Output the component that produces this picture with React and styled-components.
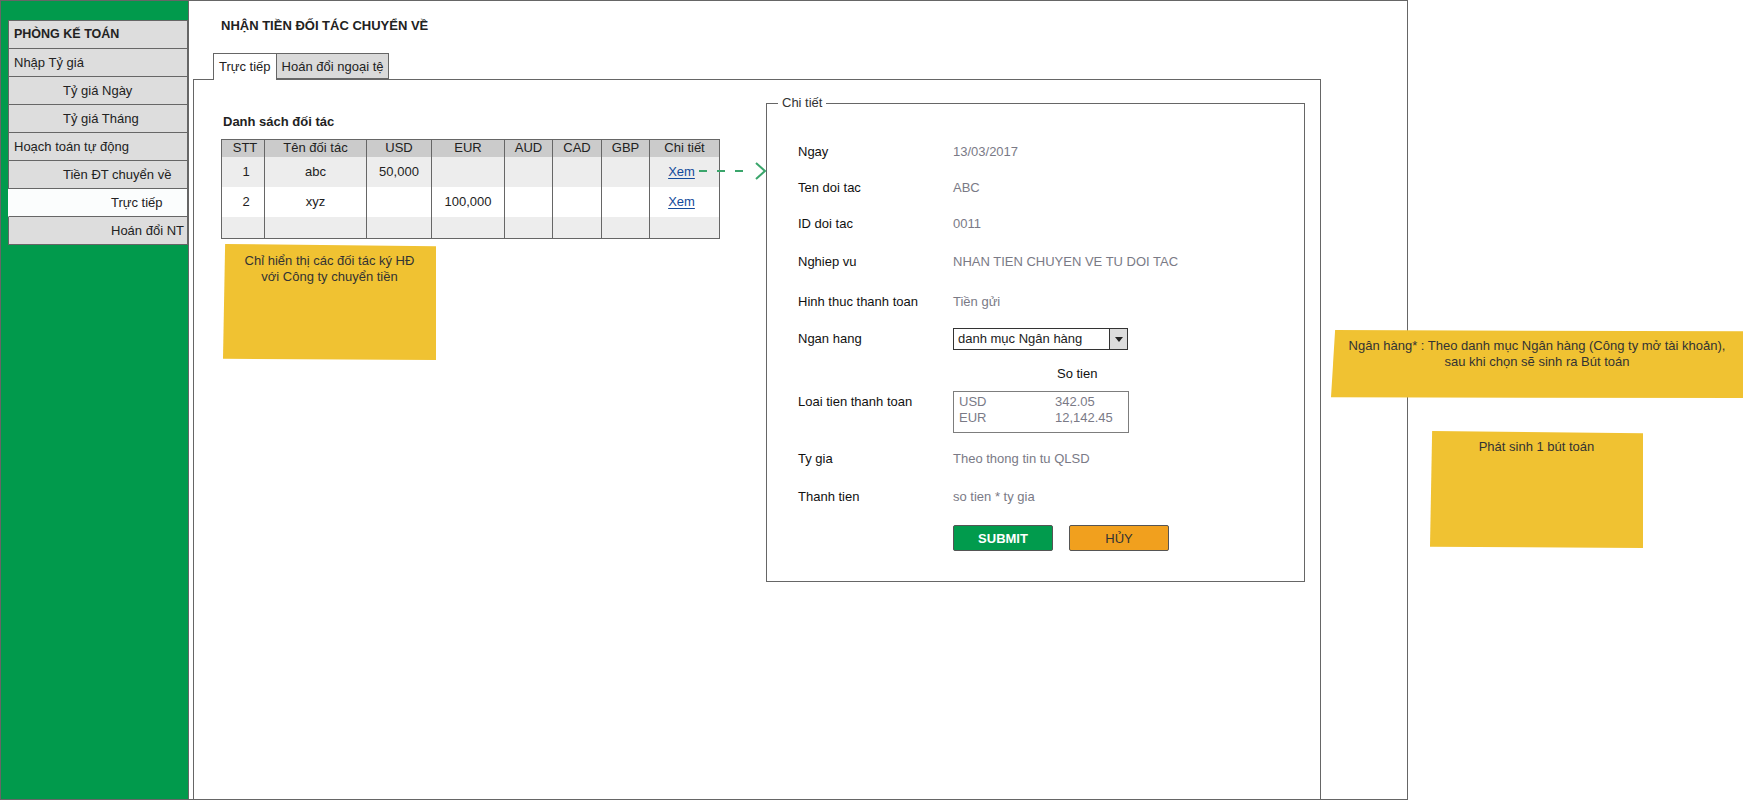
import React from "react";
import styled, { createGlobalStyle } from "styled-components";

const menuItems = [
  { label: "PHÒNG KẾ TOÁN", level: 0, header: true },
  { label: "Nhập Tỷ giá", level: 0 },
  { label: "Tỷ giá Ngày", level: 1 },
  { label: "Tỷ giá Tháng", level: 1 },
  { label: "Hoạch toán tự động", level: 0 },
  { label: "Tiền ĐT chuyển về", level: 1 },
  { label: "Trực tiếp", level: 2, active: true },
  { label: "Hoán đổi NT", level: 2 },
];

const indent = [5, 54, 102];

const columns = ["STT", "Tên đối tác", "USD", "EUR", "AUD", "CAD", "GBP", "Chi tiết"];
const columnWidths = [43, 102, 65, 73, 48, 49, 48, 70];

const partners = [
  { stt: "1", name: "abc", usd: "50,000", eur: "", link: true },
  { stt: "2", name: "xyz", usd: "", eur: "100,000", link: true },
  { stt: "", name: "", usd: "", eur: "", link: false, short: true },
];

export default function App() {
  return (
    <>
      <GlobalStyle />
      <Canvas>
        <Frame>
          <Sidebar>
            <Menu>
              {menuItems.map((item) => (
                <MenuItem
                  key={item.label}
                  $indent={indent[item.level]}
                  $header={item.header}
                  $active={item.active}
                >
                  {item.label}
                </MenuItem>
              ))}
            </Menu>
          </Sidebar>

          <Main>
            <PageTitle>NHẬN TIỀN ĐỐI TÁC CHUYỂN VỀ</PageTitle>
            <Tabs>
              <Tab $active>Trực tiếp</Tab>
              <Tab>Hoán đổi ngoại tệ</Tab>
            </Tabs>

            <Panel>
              <ListColumn>
                <SectionTitle>Danh sách đối tác</SectionTitle>
                <PartnerTable>
                  <colgroup>
                    {columnWidths.map((w, i) => (
                      <col key={i} style={{ width: w }} />
                    ))}
                  </colgroup>
                  <thead>
                    <tr>
                      {columns.map((c) => (
                        <th key={c}>{c}</th>
                      ))}
                    </tr>
                  </thead>
                  <tbody>
                    {partners.map((p, i) => (
                      <PartnerRow key={i} $striped={i % 2 === 0} $short={p.short}>
                        <SttCell>{p.stt}</SttCell>
                        <td>{p.name}</td>
                        <td>{p.usd}</td>
                        <td>{p.eur}</td>
                        <td />
                        <td />
                        <td />
                        <LinkCell>{p.link && <ViewLink>Xem</ViewLink>}</LinkCell>
                      </PartnerRow>
                    ))}
                  </tbody>
                </PartnerTable>
                <StickyNote $width={213} $height={116} $pad={9}>
                  Chỉ hiển thị các đối tác ký HĐ
                  <br />
                  với Công ty chuyển tiền
                </StickyNote>
              </ListColumn>

              <Connector width="70" height="18" viewBox="0 0 70 18">
                <line x1="0" y1="9" x2="50" y2="9" stroke="#3aa56b" strokeWidth="2" strokeDasharray="8 10" />
                <polyline points="57,1 66,9 57,17" fill="none" stroke="#3aa56b" strokeWidth="2" />
              </Connector>

              <DetailBox>
                <Legend>Chi tiết</Legend>
                <DetailBody>
                  <Field $gap={30}>
                    <Label>Ngay</Label>
                    <Value>13/03/2017</Value>
                  </Field>
                  <Field $gap={14}>
                    <Label>Ten doi tac</Label>
                    <Value>ABC</Value>
                  </Field>
                  <Field $gap={14}>
                    <Label>ID doi tac</Label>
                    <Value>0011</Value>
                  </Field>
                  <Field $gap={16}>
                    <Label>Nghiep vu</Label>
                    <Value>NHAN TIEN CHUYEN VE TU DOI TAC</Value>
                  </Field>
                  <Field $gap={18}>
                    <Label>Hinh thuc thanh toan</Label>
                    <Value>Tiền gửi</Value>
                  </Field>
                  <Field $gap={15}>
                    <Label>Ngan hang</Label>
                    <Select>
                      <SelectText>danh mục Ngân hàng</SelectText>
                      <SelectButton>
                        <Caret />
                      </SelectButton>
                    </Select>
                  </Field>
                  <Field $gap={13}>
                    <Label />
                    <AmountHeading>So tien</AmountHeading>
                  </Field>
                  <Field $gap={6} $height={42} $top>
                    <Label $pad={3}>Loai tien thanh toan</Label>
                    <AmountBox>
                      <AmountLine>
                        <span>USD</span>
                        <span>342.05</span>
                      </AmountLine>
                      <AmountLine>
                        <span>EUR</span>
                        <span>12,142.45</span>
                      </AmountLine>
                    </AmountBox>
                  </Field>
                  <Field $gap={15}>
                    <Label>Ty gia</Label>
                    <Value>Theo thong tin tu QLSD</Value>
                  </Field>
                  <Field $gap={16}>
                    <Label>Thanh tien</Label>
                    <Value>so tien * ty gia</Value>
                  </Field>
                  <Field $gap={17} $height={26}>
                    <Label />
                    <Actions>
                      <Button $variant="submit">SUBMIT</Button>
                      <Button $variant="cancel">HỦY</Button>
                    </Actions>
                  </Field>
                </DetailBody>
              </DetailBox>
            </Panel>
          </Main>
        </Frame>

        <FloatingNote $x={1331} $y={330} $width={412} $height={68} $pad={8}>
          Ngân hàng* : Theo danh mục Ngân hàng (Công ty mở tài khoản),
          <br />
          sau khi chọn sẽ sinh ra Bút toán
        </FloatingNote>
        <FloatingNote $x={1430} $y={431} $width={213} $height={117} $pad={8}>
          Phát sinh 1 bút toán
        </FloatingNote>
      </Canvas>
    </>
  );
}

const GlobalStyle = createGlobalStyle`
  html, body {
    margin: 0;
    padding: 0;
    background: #fff;
  }
  body {
    font-family: "Liberation Sans", Arial, sans-serif;
    font-size: 13px;
    color: #222;
  }
  *, *::before, *::after {
    box-sizing: border-box;
  }
`;

const Canvas = styled.div`
  position: relative;
  width: 1744px;
  height: 800px;
  overflow: hidden;
`;

const Frame = styled.div`
  display: flex;
  width: 1408px;
  height: 800px;
  border: 1px solid #666;
`;

const Sidebar = styled.aside`
  width: 188px;
  flex-shrink: 0;
  background: #019a4c;
  border-right: 1px solid #666;
  padding: 19px 0 0 7px;
`;

const Menu = styled.nav`
  border-top: 1px solid #666;
`;

const MenuItem = styled.div`
  height: 28px;
  line-height: 27px;
  padding-left: ${({ $indent }) => $indent}px;
  background: ${({ $active }) => ($active ? "#fbfdfd" : "#dddddd")};
  border: 1px solid #666;
  border-top: none;
  border-left-color: ${({ $active }) => ($active ? "#fbfdfd" : "#666")};
  font-size: ${({ $header }) => ($header ? "12.5px" : "13px")};
  font-weight: ${({ $header }) => ($header ? 700 : 400)};
  color: #222;
  white-space: nowrap;
`;

const Main = styled.main`
  flex: 1;
  display: flex;
  flex-direction: column;
  padding-left: 4px;
`;

const PageTitle = styled.h1`
  margin: 0;
  height: 52px;
  padding: 17px 0 0 28px;
  font-size: 13px;
  line-height: 16px;
  font-weight: 700;
  color: #222;
`;

const Tabs = styled.div`
  position: relative;
  z-index: 2;
  display: flex;
  align-items: flex-start;
  height: 26px;
  padding-left: 20px;
`;

const Tab = styled.div`
  height: ${({ $active }) => ($active ? 27 : 26)}px;
  line-height: 25px;
  padding: 0 5px;
  border: 1px solid #666;
  border-bottom: ${({ $active }) => ($active ? "none" : "1px solid #666")};
  background: ${({ $active }) => ($active ? "#fff" : "#dadada")};
  color: #222;
  white-space: nowrap;
  & + & {
    margin-left: -1px;
  }
`;

const Panel = styled.section`
  position: relative;
  flex: 1;
  width: 1128px;
  display: flex;
  align-items: flex-start;
  gap: 46px;
  padding-left: 27px;
  border: 1px solid #666;
  border-bottom: none;
`;

const ListColumn = styled.div`
  width: 499px;
  margin-top: 34px;
`;

const SectionTitle = styled.h2`
  margin: 0;
  padding-left: 2px;
  font-size: 13px;
  line-height: 16px;
  font-weight: 700;
  color: #222;
`;

const PartnerTable = styled.table`
  margin-top: 9px;
  width: 499px;
  table-layout: fixed;
  border-collapse: collapse;
  border: 1px solid #666;

  th,
  td {
    padding: 0;
    border-left: 1px solid #666;
    border-right: 1px solid #666;
    text-align: center;
    font-size: 13px;
    line-height: 16px;
    color: #222;
    white-space: nowrap;
  }

  th {
    height: 17px;
    background: #cbcbcb;
    font-weight: 400;
  }

  th:first-child {
    padding-left: 4px;
  }
`;

const PartnerRow = styled.tr`
  background: ${({ $striped }) => ($striped ? "#ededed" : "#fff")};
  td {
    height: ${({ $short }) => ($short ? 22 : 30)}px;
  }
`;

const SttCell = styled.td`
  && {
    padding-left: 6px;
  }
`;

const LinkCell = styled.td`
  && {
    padding-right: 6px;
  }
`;

const ViewLink = styled.a`
  color: #124a9a;
  text-decoration: underline;
  text-underline-offset: 2px;
  cursor: pointer;
`;

const StickyNote = styled.div`
  width: ${({ $width }) => $width}px;
  height: ${({ $height }) => $height}px;
  margin: 5px 0 0 2px;
  padding-top: ${({ $pad }) => $pad}px;
  background: #f0c232;
  color: #333;
  font-size: 13px;
  line-height: 16px;
  text-align: center;
  clip-path: polygon(1% 0, 100% 2%, 100% 100%, 0 99%);
`;

const FloatingNote = styled(StickyNote)`
  position: absolute;
  left: ${({ $x }) => $x}px;
  top: ${({ $y }) => $y}px;
  margin: 0;
`;

const Connector = styled.svg`
  position: absolute;
  left: 505px;
  top: 82px;
  overflow: visible;
`;

const DetailBox = styled.fieldset`
  width: 539px;
  margin: 15px 0 0;
  padding: 0;
  min-width: 0;
  border: 1px solid #666;
`;

const Legend = styled.legend`
  margin-left: 11px;
  padding: 0 4px;
  font-size: 13px;
  line-height: 16px;
  color: #333;
`;

const DetailBody = styled.div`
  padding: 0 0 30px 31px;
`;

const Field = styled.div`
  display: flex;
  align-items: ${({ $top }) => ($top ? "flex-start" : "center")};
  height: ${({ $height }) => $height || 22}px;
  margin-top: ${({ $gap }) => $gap}px;
`;

const Label = styled.div`
  width: 155px;
  flex-shrink: 0;
  padding-top: ${({ $pad }) => $pad || 0}px;
  line-height: 16px;
  color: #111;
`;

const Value = styled.div`
  line-height: 16px;
  color: #7a7a86;
`;

const Select = styled.div`
  display: flex;
  width: 175px;
  height: 22px;
  border: 1px solid #333;
  background: #fff;
`;

const SelectText = styled.div`
  flex: 1;
  padding-left: 4px;
  line-height: 19px;
  color: #222;
`;

const SelectButton = styled.div`
  width: 18px;
  display: flex;
  align-items: center;
  justify-content: center;
  background: #dcdcdc;
  border-left: 1px solid #333;
`;

const Caret = styled.span`
  width: 0;
  height: 0;
  border-left: 4px solid transparent;
  border-right: 4px solid transparent;
  border-top: 5px solid #222;
`;

const AmountHeading = styled.div`
  padding-left: 104px;
  line-height: 16px;
  color: #111;
`;

const AmountBox = styled.div`
  width: 176px;
  height: 42px;
  padding: 2px 0 0 5px;
  border: 1px solid #7d7d7d;
`;

const AmountLine = styled.div`
  display: grid;
  grid-template-columns: 96px 1fr;
  line-height: 16px;
  color: #7a7a86;
`;

const Actions = styled.div`
  display: flex;
  gap: 16px;
`;

const Button = styled.button`
  width: 100px;
  height: 26px;
  padding: 0;
  border: 1px solid #555;
  border-radius: 2px;
  font-family: inherit;
  font-size: 13px;
  font-weight: ${({ $variant }) => ($variant === "submit" ? 700 : 400)};
  color: ${({ $variant }) => ($variant === "submit" ? "#fff" : "#333")};
  background: ${({ $variant }) => ($variant === "submit" ? "#019b4d" : "#f1a01e")};
  cursor: pointer;
`;
